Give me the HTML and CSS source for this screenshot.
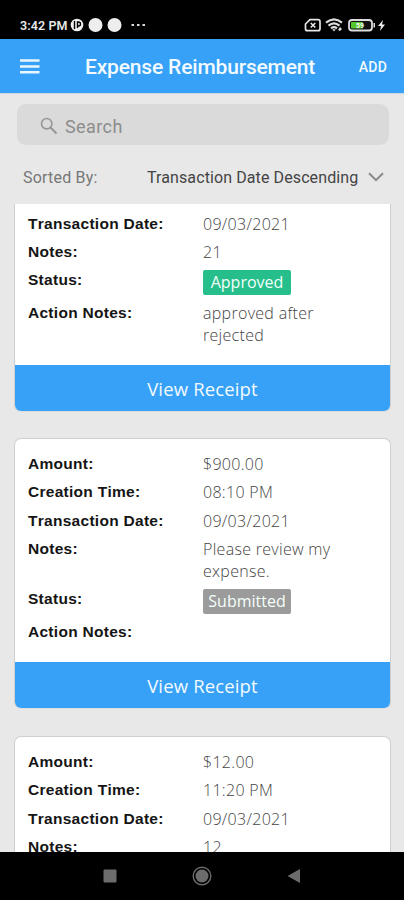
FILE: index.html
```html
<!DOCTYPE html>
<html lang="en">
<head>
<meta charset="utf-8">
<title>Expense Reimbursement</title>
<link rel="stylesheet" href="styles.css">
</head>
<body>
<div class="phone">
  <div class="status-bar">
    <span class="clock">3:42 PM</span>
    <svg class="notifications" width="78" height="16" viewBox="0 0 78 16">
      <circle cx="7" cy="8" r="6.3" fill="#eee"/>
      <path d="M4.500 4v8M7.500 5h1a2 2 0 0 1 0 4h-1zv6" fill="none" stroke="#000" stroke-width="1.400"/>
      <circle cx="25.500" cy="8" r="7" fill="#eee"/>
      <circle cx="44.500" cy="8" r="7" fill="#eee"/>
      <path d="M61.500 7h2.500v2h-2.500zM67 7h2.500v2H67zM72.500 7H75v2h-2.500z" fill="#ddd"/>
    </svg>
    <svg class="system" width="82" height="16" viewBox="0 0 82 16">
      <path d="M6 2.700h8q2 0 2 2v7q0 2-2 2H3.500q-2 0-2-2V7z" fill="none" stroke="#e6e6e6" stroke-width="1.700"/>
      <path d="M6.800 6l4.500 4.500M11.300 6l-4.500 4.500" stroke="#e6e6e6" stroke-width="1.600"/>
      <path d="M22 5.700q8-6.500 16 0M24.500 8.700q5.500-4.500 11 0M27 11.300q3-2.300 6 0" fill="none" stroke="#ddd" stroke-width="2.200"/>
      <path d="M28.200 12.200h3.600L30 14.500zM34 13l2-3 2 2-2 2z" fill="#ddd"/>
      <rect x="45" y="3" width="23" height="10.500" rx="3" fill="#111" stroke="#ddd" stroke-width="1.800"/>
      <rect x="47" y="5" width="12" height="6.500" rx="1" fill="#55c82d"/>
      <path d="M69.500 6h1.500v4.500h-1.500z" fill="#ddd"/>
      <text x="52" y="11" class="charge">59</text>
      <path d="M79 3l-5 6h3l-1 5 5-6.500h-3z" fill="#eee"/>
    </svg>
  </div>

  <header class="app-bar">
    <svg class="menu" width="20" height="15" viewBox="0 0 20 15"><path d="M0 1.500h19.500M0 7.500h19.500M0 13.300h19.500" stroke="#e8f6ff" stroke-width="2.600"/></svg>
    <h1>Expense Reimbursement</h1>
    <span class="add">ADD</span>
  </header>

  <div class="search">
    <svg width="18" height="18" viewBox="0 0 18 18"><circle cx="6.700" cy="6.700" r="5.200" fill="none" stroke="#969696" stroke-width="1.600"/><path d="M10.500 10.500l6 6" stroke="#969696" stroke-width="2"/></svg>
    <span>Search</span>
  </div>

  <div class="sort">
    <span class="sort-label">Sorted By:</span>
    <span class="sort-value">Transaction Date Descending</span>
    <svg width="16" height="10" viewBox="0 0 16 10"><path d="M1 1.200l7 7 7-7" fill="none" stroke="#8a8a8a" stroke-width="2"/></svg>
  </div>

  <main class="list">
    <section class="card continued">
      <dl>
        <dt>Transaction Date:</dt><dd>09/03/2021</dd>
        <dt>Notes:</dt><dd>21</dd>
        <dt class="state">Status:</dt><dd class="state"><span class="badge approved">Approved</span></dd>
        <dt>Action Notes:</dt><dd>approved after rejected</dd>
      </dl>
      <div class="receipt"><span>View Receipt</span></div>
    </section>
    <section class="card">
      <dl>
        <dt>Amount:</dt><dd>$900.00</dd>
        <dt>Creation Time:</dt><dd>08:10 PM</dd>
        <dt>Transaction Date:</dt><dd>09/03/2021</dd>
        <dt>Notes:</dt><dd>Please review my expense.</dd>
        <dt class="state">Status:</dt><dd class="state"><span class="badge submitted">Submitted</span></dd>
        <dt>Action Notes:</dt><dd></dd>
      </dl>
      <div class="receipt"><span>View Receipt</span></div>
    </section>
    <section class="card">
      <dl>
        <dt>Amount:</dt><dd>$12.00</dd>
        <dt>Creation Time:</dt><dd>11:20 PM</dd>
        <dt>Transaction Date:</dt><dd>09/03/2021</dd>
        <dt>Notes:</dt><dd>12</dd>
      </dl>
    </section>
  </main>

  <nav class="nav-bar">
    <svg width="14" height="14" viewBox="0 0 14 14"><rect x=".5" y=".5" width="13" height="13" rx="1" fill="#6c6c6c"/></svg>
    <svg width="20" height="20" viewBox="0 0 20 20"><circle cx="10" cy="10" r="8.800" fill="none" stroke="#6c6c6c" stroke-width="1.400"/><circle cx="10" cy="10" r="6.500" fill="#6c6c6c"/></svg>
    <svg width="14" height="14" viewBox="0 0 14 14"><path d="M13 0v14L.5 7z" fill="#6c6c6c"/></svg>
  </nav>
</div>
</body>
</html>
```
FILE: styles.css
```css
* { box-sizing: border-box; }
body { margin: 0; background: #e8e8e8; font-family: Roboto, sans-serif; }
.phone { width: 404px; height: 900px; display: flex; flex-direction: column; overflow: hidden; }
svg { display: block; flex: none; }

.status-bar { flex: none; height: 39px; background: #000; display: flex; align-items: center; padding: 11px 18px 0 20px; }
.clock { width: 50px; color: #e8e8e8; font-size: 12.5px; font-weight: 600; letter-spacing: .1px; white-space: nowrap; }
.system { margin-left: auto; }
.charge { font: bold 7px Roboto, sans-serif; fill: #fff; }

.app-bar { flex: none; height: 54px; background: #36a1f6; display: flex; align-items: center; padding: 1px 17px 0 20px; color: #f2faff; box-shadow: 0 1px 1px #ccd8df; }
.app-bar h1 { margin: 0 0 0 45px; font-size: 21px; font-weight: 500; letter-spacing: -.17px; white-space: nowrap; }
.add { margin-left: auto; font-size: 14px; font-weight: 500; letter-spacing: .2px; }

.search { flex: none; height: 41px; margin: 11px 15px 0 17px; padding: 3px 23px 0; border-radius: 9px; background: #dadada; display: flex; align-items: center; gap: 7px; color: #8c8c8c; font-size: 18px; letter-spacing: .4px; }
.sort { flex: none; height: 59px; padding: 5px 20px 0 23px; display: flex; align-items: center; font-size: 16px; letter-spacing: .1px; }
.sort-label { width: 124px; color: #777; letter-spacing: .2px; }
.sort-value { color: #444; white-space: nowrap; }
.sort svg { margin-left: auto; }

.list { flex: 1; min-height: 0; overflow: hidden; display: flex; flex-direction: column; gap: 26.500px; padding: 0 13px 0 14px; }
.card { flex: none; border: 1px solid #cfcfcf; border-bottom-color: #ddd; border-radius: 7px; background: #fff; overflow: hidden; }
.continued { border-top: 0; border-radius: 0 0 7px 7px; margin-bottom: -.8px; }
dl { margin: 0; padding: 14px 50px 19px 13px; display: grid; grid-template-columns: 175px 1fr; row-gap: 6.500px; line-height: 22px; }
.continued dl { padding-top: 8.500px; padding-bottom: 19px; }
dt { font-family: "Liberation Sans", Arial, sans-serif; font-weight: 700; font-size: 15.500px; font-kerning: none; letter-spacing: .28px; color: #151515; white-space: nowrap; }
dd { margin: 0; font-family: "Open Sans", sans-serif; font-weight: 300; font-size: 16px; letter-spacing: .3px; color: #444; }
.state { height: 26px; }
dt.state { margin-top: -1px; }
.badge { display: flex; justify-content: center; align-items: center; width: 88px; height: 25px; border-radius: 2px; color: #f4fffa; font-size: 16px; font-weight: 400; letter-spacing: 0; }
.approved { background: #26bf8c; }
.submitted { background: #9b9b9b; }
.receipt { height: 47px; margin: 0 -1px -1px; background: #36a1f6; display: flex; align-items: center; justify-content: center; color: #f2faff; font: 18.500px "Open Sans", sans-serif; letter-spacing: .15px; }

.nav-bar { flex: none; height: 48px; background: #000; display: flex; align-items: center; justify-content: center; gap: 75px; }
```
